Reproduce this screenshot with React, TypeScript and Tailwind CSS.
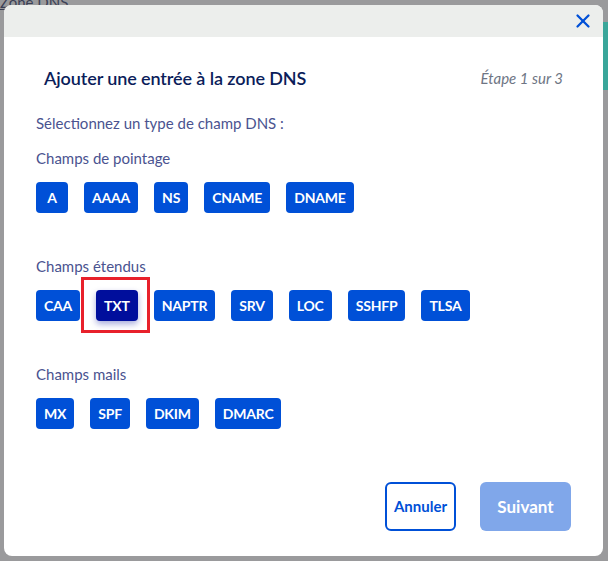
import { X } from "lucide-react";

const pointage = ["A", "AAAA", "NS", "CNAME", "DNAME"];
const etendus = ["CAA", "TXT", "NAPTR", "SRV", "LOC", "SSHFP", "TLSA"];
const mails = ["MX", "SPF", "DKIM", "DMARC"];

function TypeButton({ label, selected }: { label: string; selected?: boolean }) {
  const btn = (
    <button
      className={
        "h-[31px] min-w-[32px] px-[8px] rounded-[4px] text-white font-bold text-[14px] tracking-[-0.2px] leading-none " +
        (selected ? "bg-[#000e9c] shadow-[0_3px_6px_rgba(0,14,156,0.35)]" : "bg-[#0050d7]")
      }
    >
      {label}
    </button>
  );
  if (!selected) return btn;
  // encadré rouge autour du type choisi
  return (
    <div className="-mt-[13px] -mb-[12px] -ml-[15px] -mr-[12px] border-[3px] border-[#e8212b] pl-[12px] pr-[9px] pt-[10px] pb-[9px]">
      {btn}
    </div>
  );
}

function Section({ title, items, selected }: { title: string; items: string[]; selected?: string }) {
  return (
    <div>
      <p className="text-[15px] text-[#4a5390] leading-5">{title}</p>
      <div className="mt-[14px] flex items-center gap-4">
        {items.map(i => (
          <TypeButton key={i} label={i} selected={i === selected} />
        ))}
      </div>
    </div>
  );
}

export default function App() {
  return (
    <div
      className="relative w-[608px] h-[561px] overflow-hidden bg-[#9a9a9c] px-[4px] pt-[5px]"
      style={{ fontFamily: "Lato, 'Noto Sans', sans-serif" }}
    >
      {/* page derrière le voile */}
      <span className="absolute left-0 -top-[9px] text-[15px] text-[#3a3f55] underline">Zone DNS</span>
      <div className="absolute right-0 top-[22px] w-[5px] h-[68px] bg-[#3aa69a]" />

      <div className="relative h-[551px] w-[599px] rounded-[8px] bg-white overflow-hidden flex flex-col">
        {/* En-tête */}
        <div className="h-[32px] bg-[#eceeec] flex justify-end items-center pr-[9px]">
          <X size={22} strokeWidth={2.5} className="text-[#0050d7]" />
        </div>

        <div className="flex items-center justify-between pl-[40px] pr-[40px] mt-[28px]">
          <h2 className="text-[18px] font-semibold tracking-[-0.1px] text-[#0b1d5a]">
            Ajouter une entrée à la zone DNS
          </h2>
          <span className="text-[15px] italic text-[#6e7584]">Étape 1 sur 3</span>
        </div>

        <div className="pl-[32px] mt-[21px]">
          <p className="text-[15px] text-[#4a5390] leading-5">Sélectionnez un type de champ DNS :</p>
          <div className="mt-[15px] flex flex-col gap-[43px]">
            <Section title="Champs de pointage" items={pointage} />
            <Section title="Champs étendus" items={etendus} selected="TXT" />
            <Section title="Champs mails" items={mails} />
          </div>
        </div>

        {/* Actions */}
        <div className="mt-auto mb-[25px] flex justify-end gap-[24px] pr-[32px]">
          <button className="h-[49px] px-[7px] rounded-[6px] border-2 border-[#0050d7] text-[#0050d7] font-bold text-[15px]">
            Annuler
          </button>
          <button className="h-[49px] w-[91px] rounded-[6px] bg-[#80a7ea] text-white font-bold text-[17px]">
            Suivant
          </button>
        </div>
      </div>
    </div>
  );
}
